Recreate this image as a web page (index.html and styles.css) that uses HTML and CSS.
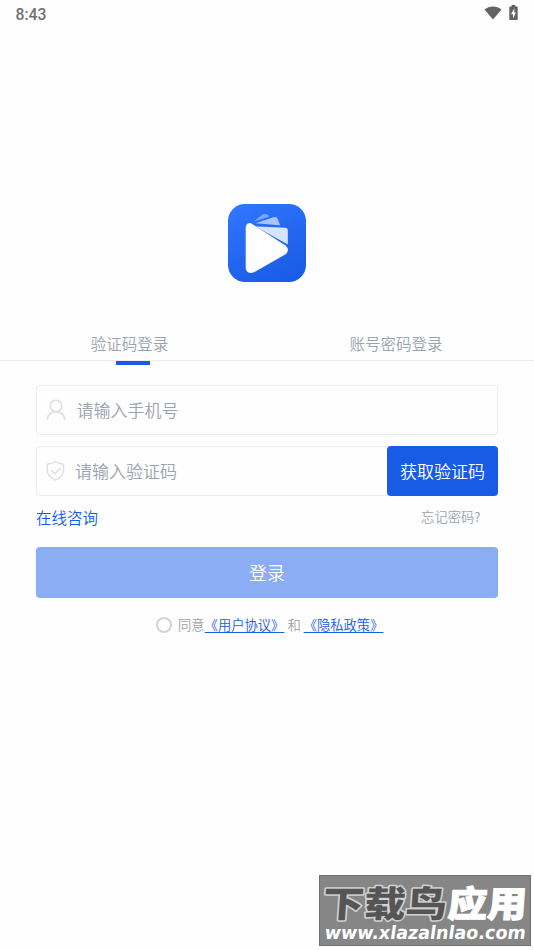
FILE: index.html
```html
<!DOCTYPE html>
<html lang="zh-CN">
<head>
<meta charset="utf-8">
<title>登录</title>
<link rel="stylesheet" href="styles.css">
</head>
<body>
<header class="status">
  <span class="time">8:43</span>
  <span class="status-icons">
    <svg class="wifi" width="18" height="14" viewBox="0 0 18 14"><path d="M.5 3.4C5.4-.5 12.6-.5 17.5 3.4L9 13.6Z" fill="#636363"/></svg>
    <svg class="battery" width="9" height="15" viewBox="0 0 9 15"><path d="M2.6 0h3.8v1.6h1.3q1 0 1 1V14q0 1-1 1H1.3q-1 0-1-1V2.600q0-1 1-1h1.300z" fill="#636363"/><path d="M5.300 3.600 2 9.200h2v4L7 7.500H5.300z" fill="#fff"/></svg>
  </span>
</header>
<main>
  <svg class="logo" width="78" height="78" viewBox="0 0 78 78">
    <defs><linearGradient id="bg" x1="0.2" y1="0" x2="0.7" y2="1"><stop offset="0" stop-color="#2f75fd"/><stop offset="1" stop-color="#195ce5"/></linearGradient></defs>
    <rect width="78" height="78" rx="17" fill="url(#bg)"/>
    <path d="M25.500 17.600 34 11Q36 9.600 39 10.300 41.500 11.500 40.500 13Z" fill="#fff" opacity=".38"/>
    <path d="M27.500 19.300 45.500 13.200Q48.500 12.300 49.500 14.500L52.200 21.300Z" fill="#fff" opacity=".6"/>
    <path d="M27.500 22.500 57.700 23.800Q59.800 24 59.800 26V40.500Z" fill="#fff" opacity=".82"/>
    <path d="M17.700 23.500Q18.500 18.500 23 19.200L57.500 41.500Q62 45.500 58 50L26.500 68Q20 71 17.700 65Z" fill="#fff"/>
  </svg>
  <nav class="tabs">
    <div class="tab active">验证码登录</div>
    <div class="tab second">账号密码登录</div>
  </nav>
  <form class="form">
    <div class="field">
      <svg class="icon" width="20" height="22" viewBox="0 0 20 22" fill="none" stroke="#dedfe1" stroke-width="1.500" stroke-linecap="round"><circle cx="10" cy="7" r="5.800"/><path d="M1.300 20.300C1.800 15.800 5 12.800 10 12.800s8.200 3 8.700 7.500"/></svg>
      <span class="placeholder phone">请输入手机号</span>
    </div>
    <div class="field code-field">
      <svg class="icon" width="20" height="22" viewBox="0 0 20 22" fill="none" stroke="#dedfe1" stroke-width="1.400" stroke-linecap="round" stroke-linejoin="round"><path d="M9.300 1.500Q13 4 17.500 4.200V10Q17.500 16.500 9.300 20.200 1.300 16.500 1.300 10V4.200Q5.800 4 9.300 1.500Z"/><path d="m5.300 10.300 3.400 3.400 5.500-5.300"/></svg>
      <span class="placeholder">请输入验证码</span>
      <span class="code-btn">获取验证码</span>
    </div>
    <div class="links"><span class="consult">在线咨询</span><span class="forgot">忘记密码?</span></div>
    <div class="login">登录</div>
    <div class="agree"><i class="radio"></i><span>同意</span><a>《用户协议》</a><span class="and">和</span><a>《隐私政策》</a></div>
  </form>
</main>
<aside class="watermark">
  <svg width="212" height="71" viewBox="0 0 212 71">
    <rect x=".5" y=".5" width="211" height="70" fill="#868686" stroke="#707070"/>
    <g class="wm-cn" transform="skewX(-4)">
      <text class="wm-dark" x="6" y="42" textLength="124" lengthAdjust="spacingAndGlyphs">下载鸟</text>
      <text class="wm-light" x="131" y="42" textLength="79" lengthAdjust="spacingAndGlyphs">应用</text>
    </g>
    <g transform="translate(5 64) skewX(-8)">
      <text class="wm-url" x="0" y="0" textLength="201" lengthAdjust="spacingAndGlyphs">www.xlazalnlao.com</text>
    </g>
  </svg>
</aside>
</body>
</html>
```
FILE: styles.css
```css
* { box-sizing: border-box; }
body {
  margin: 0;
  width: 534px;
  height: 950px;
  overflow: hidden;
  background: #fefefe;
  color: #9ca3af;
  font-family: "Noto Sans CJK SC", sans-serif;
  font-weight: 350;
}
.status {
  display: flex;
  justify-content: space-between;
  height: 28px;
  padding: 5px 16px 0 15.500px;
}
.time { font: 500 15.700px/20px Roboto, sans-serif; color: #707070; }
.status-icons { display: flex; gap: 7px; }
.wifi { margin-top: 1px; }
.logo { display: block; margin: 176px auto 0; }
.tabs {
  display: grid;
  grid-template-columns: 259px 275px;
  height: 79px;
  border-bottom: 1px solid #ececee;
}
.tab {
  position: relative;
  padding-top: 49px;
  text-align: center;
  font-size: 15.500px;
  line-height: 24px;
}
.second { padding-right: 1px; }
.active::after {
  content: "";
  position: absolute;
  left: 116px;
  top: 79px;
  width: 34px;
  height: 4px;
  background: #185ce6;
}
.form { padding: 24px 36px 0; }
.field {
  display: flex;
  align-items: center;
  height: 50px;
  padding-left: 9px;
  border: 1px solid #ececee;
  border-radius: 4px;
}
.code-field { margin-top: 11px; }
.icon { flex: none; margin-top: -1px; }
.placeholder { margin-left: 9px; font-size: 17px; line-height: 26px; }
.phone { margin-left: 10.500px; }
.code-btn {
  width: 111px;
  height: 50px;
  margin: 0 -1px 0 auto;
  border-radius: 4px;
  background: #185ce6;
  color: #fff;
  font-size: 17px;
  line-height: 50px;
  text-align: center;
}
.links {
  display: flex;
  justify-content: space-between;
  height: 51px;
  padding-top: 9px;
  line-height: 24px;
}
.consult { color: #185ce6; font-size: 15.500px; }
.forgot { margin-right: 17.500px; font-size: 13.300px; }
.login {
  height: 51px;
  border-radius: 4px;
  background: #8badf3;
  color: #fff;
  font-size: 18px;
  line-height: 50px;
  text-align: center;
}
.agree {
  display: flex;
  align-items: center;
  margin: 17px 0 0 120px;
  font-size: 13.300px;
  line-height: 20px;
  white-space: nowrap;
}
.radio {
  width: 16px;
  height: 16px;
  margin-right: 6px;
  border: 2px solid #d4d4d4;
  border-radius: 50%;
}
.agree a { color: #185ce6; text-decoration: underline; text-underline-offset: 2px; }
.and { margin: 0 3px; }
.watermark { position: absolute; left: 319px; top: 875px; height: 71px; }
.wm-cn { font-size: 36px; font-weight: 900; paint-order: stroke; stroke-linejoin: round; }
.wm-dark { fill: #555; stroke: #d2d2d2; stroke-width: 3px; }
.wm-light { fill: #fff; stroke: #fff; stroke-width: 1px; }
.wm-url { font: bold 18.500px "DejaVu Sans", sans-serif; fill: #fff; }
```
